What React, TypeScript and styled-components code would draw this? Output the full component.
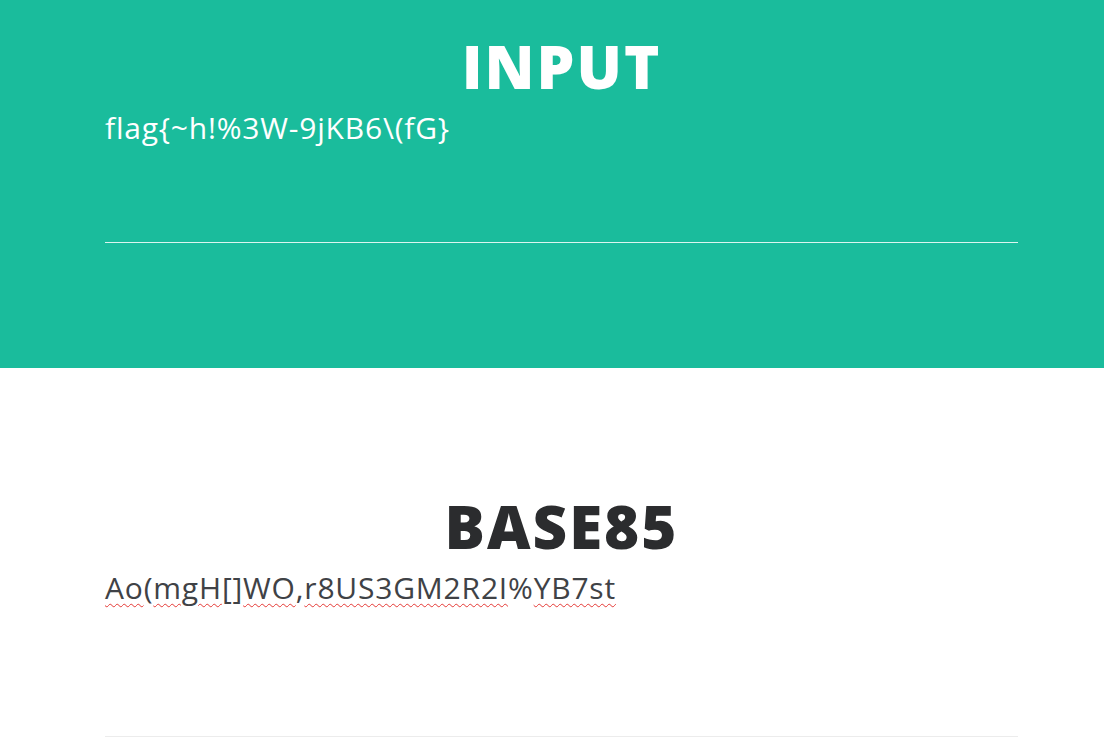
import styled, { createGlobalStyle } from 'styled-components';

const GlobalStyle = createGlobalStyle`
  html, body {
    margin: 0;
    padding: 0;
    background: #ffffff;
    overflow: hidden;
  }
`;

interface Segment {
  text: string;
  misspelled?: boolean;
}

const inputText = 'flag{~h!%3W-9jKB6\\(fG}';

const outputSegments: Segment[] = [
  { text: 'Ao', misspelled: true },
  { text: '(' },
  { text: 'mgH', misspelled: true },
  { text: '[]' },
  { text: 'WO', misspelled: true },
  { text: ',' },
  { text: 'r8US3GM2R2I', misspelled: true },
  { text: '%' },
  { text: 'YB7st', misspelled: true },
];

const App = () => {
  return (
    <>
      <GlobalStyle />
      <Page>
        <Section $variant="primary">
          <Inner>
            <Title $variant="primary">INPUT</Title>
            <Field $variant="primary">{inputText}</Field>
          </Inner>
        </Section>
        <Section $variant="light">
          <Inner>
            <Title $variant="light">BASE85</Title>
            <Field $variant="light">
              {outputSegments.map((seg, i) =>
                seg.misspelled ? (
                  <Misspelled key={i}>{seg.text}</Misspelled>
                ) : (
                  <span key={i}>{seg.text}</span>
                )
              )}
            </Field>
          </Inner>
        </Section>
      </Page>
    </>
  );
};

export default App;

type Variant = 'primary' | 'light';

const Page = styled.div`
  width: 1104px;
  height: 741px;
  overflow: hidden;
`;

const Section = styled.section<{ $variant: Variant }>`
  background: ${(p) => (p.$variant === 'primary' ? '#1abc9c' : '#ffffff')};
  height: ${(p) => (p.$variant === 'primary' ? '368px' : 'auto')};
  padding-top: ${(p) => (p.$variant === 'primary' ? '34px' : '126px')};
  box-sizing: border-box;
`;

const Inner = styled.div`
  width: 913px;
  margin-left: 105px;
`;

const Title = styled.h2<{ $variant: Variant }>`
  margin: 0;
  text-align: center;
  font-family: 'Open Sans', 'Noto Sans', sans-serif;
  font-weight: 800;
  font-size: 60px;
  line-height: 64px;
  letter-spacing: 2px;
  color: ${(p) => (p.$variant === 'primary' ? '#ffffff' : '#2b2c2e')};
`;

const Field = styled.div<{ $variant: Variant }>`
  box-sizing: border-box;
  height: ${(p) => (p.$variant === 'primary' ? '145px' : '179px')};
  padding-top: 11px;
  font-family: 'Open Sans', 'Noto Sans', sans-serif;
  font-size: 30px;
  line-height: 38px;
  letter-spacing: 0.8px;
  white-space: pre;
  color: ${(p) => (p.$variant === 'primary' ? '#ffffff' : '#3f4246')};
  border-bottom: 1px solid
    ${(p) => (p.$variant === 'primary' ? 'rgba(255, 255, 255, 0.85)' : '#ececec')};
`;

const Misspelled = styled.span`
  text-decoration: underline wavy #e53935;
  text-decoration-thickness: 1px;
  text-underline-offset: 4px;
`;
